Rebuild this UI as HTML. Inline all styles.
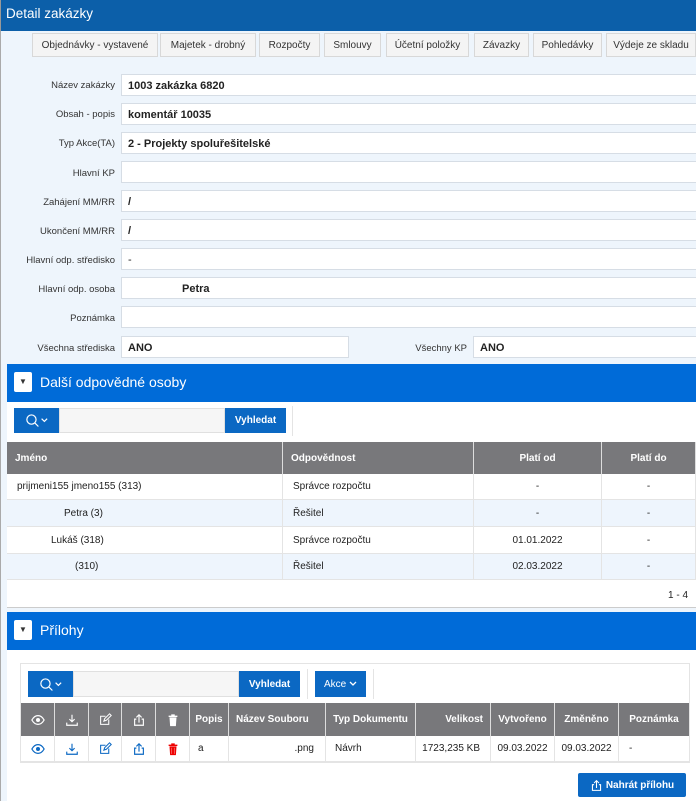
<!DOCTYPE html>
<html><head><meta charset="utf-8"><style>
*{box-sizing:border-box;margin:0;padding:0}
body{width:696px;height:801px;overflow:hidden;font-family:"Liberation Sans",sans-serif;background:#eef5fc;position:relative;font-size:10px;color:#222}
.a{position:absolute}
.hdr{left:0;top:0;width:696px;height:31px;background:#0c5fa9;color:#fff;font-size:13.5px;padding:6px 0 0 5px;border-left:1px solid #999}
.btn{top:33px;height:24px;background:#f4f4f4;border:1px solid #d8d8d8;font-size:10px;display:flex;align-items:center;justify-content:center;color:#333}
.lbl{width:115px;text-align:right;font-size:9.5px;color:#333;left:0}
.inp{background:#fff;border:1px solid #d6dde5;height:22px;font-size:11px;font-weight:bold;padding:5px 6px;left:121px;width:580px}
.sh{left:7px;width:689px;height:38px;background:#006bd8;color:#fff;font-size:14px}
.tg{left:7px;top:8px;width:18px;height:20px;background:#fff;border-radius:2px;color:#333;font-size:8px;text-align:center;line-height:20px}
.sb{background:#0b68c3;color:#fff;display:flex;align-items:center;justify-content:center;font-weight:bold;font-size:10px}
.th{background:#78787b;color:#fff;font-weight:bold;font-size:10px;display:flex;align-items:center;border-right:1px solid #ddd}
.td{font-size:10px;display:flex;align-items:center;border-right:1px solid #e4e4e4;border-bottom:1px solid #e4e4e4}
svg{display:block}
</style></head><body>
<svg width="0" height="0" style="position:absolute">
<defs>
<symbol id="eye" viewBox="0 0 16 16"><path d="M1 8c2-3.5 4.5-5 7-5s5 1.5 7 5c-2 3.5-4.5 5-7 5S3 11.5 1 8z" fill="none" stroke="currentColor" stroke-width="1.4"/><circle cx="8" cy="8" r="2.3" fill="currentColor"/></symbol>
<symbol id="dl" viewBox="0 0 16 16"><path d="M8 2v8M5 7l3 3 3-3M2 11v3h12v-3" fill="none" stroke="currentColor" stroke-width="1.3"/></symbol>
<symbol id="ed" viewBox="0 0 16 16"><path d="M12 8v6H2V4h6" fill="none" stroke="currentColor" stroke-width="1.3"/><path d="M6 10l1-3 6-6 2 2-6 6z" fill="none" stroke="currentColor" stroke-width="1.3"/></symbol>
<symbol id="up" viewBox="0 0 16 16"><path d="M8 11V2M5 5l3-3 3 3M5 7H3v7h10V7h-2" fill="none" stroke="currentColor" stroke-width="1.3"/></symbol>
<symbol id="tr" viewBox="0 0 16 16"><path d="M3 3h10v1.5H3zM6 1.5h4V3H6zM4 5h8l-.7 10H4.7z" fill="currentColor"/><path d="M6.5 6.5v7M9.5 6.5v7" stroke="#fff" stroke-width=".8" opacity=".5"/></symbol>
<symbol id="sr" viewBox="0 0 26 16"><circle cx="7" cy="7" r="5" fill="none" stroke="currentColor" stroke-width="1.3"/><path d="M10.5 10.5l4 4M18 6l3 3 3-3" fill="none" stroke="currentColor" stroke-width="1.3"/></symbol>
</defs></svg>
<div class="a" style="left:0;top:0;width:1px;height:801px;background:#aaa"></div>
<div class="a hdr">Detail zakázky</div>
<div class="a btn" style="left:32px;width:126px">Objednávky - vystavené</div>
<div class="a btn" style="left:160px;width:96px">Majetek - drobný</div>
<div class="a btn" style="left:259px;width:61px">Rozpočty</div>
<div class="a btn" style="left:324px;width:57px">Smlouvy</div>
<div class="a btn" style="left:386px;width:83px">Účetní položky</div>
<div class="a btn" style="left:474px;width:55px">Závazky</div>
<div class="a btn" style="left:533px;width:69px">Pohledávky</div>
<div class="a btn" style="left:606px;width:90px">Výdeje ze skladu</div>

<div class="a lbl" style="top:80px">Název zakázky</div><div class="a inp" style="top:74px">1003 zakázka 6820</div>
<div class="a lbl" style="top:109px">Obsah - popis</div><div class="a inp" style="top:103px">komentář 10035</div>
<div class="a lbl" style="top:138px">Typ Akce(TA)</div><div class="a inp" style="top:132px">2 - Projekty spoluřešitelské</div>
<div class="a lbl" style="top:168px">Hlavní KP</div><div class="a inp" style="top:161px"></div>
<div class="a lbl" style="top:197px">Zahájení MM/RR</div><div class="a inp" style="top:190px">/</div>
<div class="a lbl" style="top:226px">Ukončení MM/RR</div><div class="a inp" style="top:219px">/</div>
<div class="a lbl" style="top:255px">Hlavní odp. středisko</div><div class="a inp" style="top:248px;font-weight:normal">-</div>
<div class="a lbl" style="top:284px">Hlavní odp. osoba</div><div class="a inp" style="top:277px;padding-left:60px">Petra</div>
<div class="a lbl" style="top:313px">Poznámka</div><div class="a inp" style="top:306px"></div>
<div class="a lbl" style="top:343px">Všechna střediska</div><div class="a inp" style="top:336px;width:228px">ANO</div>
<div class="a lbl" style="top:343px;left:352px">Všechny KP</div><div class="a inp" style="top:336px;left:473px;width:230px">ANO</div>

<div class="a sh" style="top:364px"><div class="a tg">▼</div><div class="a" style="left:33px;top:10px">Další odpovědné osoby</div></div>
<div class="a" style="left:7px;top:402px;width:689px;height:206px;background:#fff;border-bottom:1px solid #ccc"></div>
<div class="a sb" style="left:14px;top:408px;width:45px;height:25px"><svg width="24" height="15"><use href="#sr"/></svg></div>
<div class="a" style="left:59px;top:408px;width:166px;height:25px;background:#f6f6f6;border:1px solid #e0e0e0"></div>
<div class="a sb" style="left:225px;top:408px;width:61px;height:25px">Vyhledat</div>
<div class="a" style="left:292px;top:406px;width:1px;height:30px;background:#e4e4e4"></div>
<div class="a th" style="left:7px;top:442px;width:276px;height:32px;padding-left:8px">Jméno</div>
<div class="a th" style="left:283px;top:442px;width:191px;height:32px;padding-left:8px">Odpovědnost</div>
<div class="a th" style="left:474px;top:442px;width:128px;height:32px;justify-content:center">Platí od</div>
<div class="a th" style="left:602px;top:442px;width:94px;height:32px;justify-content:center">Platí do</div>

<div class="a td" style="left:7px;top:474px;width:276px;height:26px;padding-left:10px">prijmeni155 jmeno155 (313)</div>
<div class="a td" style="left:283px;top:474px;width:191px;height:26px;padding-left:10px">Správce rozpočtu</div>
<div class="a td" style="left:474px;top:474px;width:128px;height:26px;justify-content:center">-</div>
<div class="a td" style="left:602px;top:474px;width:94px;height:26px;justify-content:center">-</div>

<div class="a td" style="left:7px;top:500px;width:276px;height:27px;padding-left:57px;background:#eef5fd">Petra (3)</div>
<div class="a td" style="left:283px;top:500px;width:191px;height:27px;padding-left:10px;background:#eef5fd">Řešitel</div>
<div class="a td" style="left:474px;top:500px;width:128px;height:27px;justify-content:center;background:#eef5fd">-</div>
<div class="a td" style="left:602px;top:500px;width:94px;height:27px;justify-content:center;background:#eef5fd">-</div>

<div class="a td" style="left:7px;top:527px;width:276px;height:27px;padding-left:44px">Lukáš (318)</div>
<div class="a td" style="left:283px;top:527px;width:191px;height:27px;padding-left:10px">Správce rozpočtu</div>
<div class="a td" style="left:474px;top:527px;width:128px;height:27px;justify-content:center">01.01.2022</div>
<div class="a td" style="left:602px;top:527px;width:94px;height:27px;justify-content:center">-</div>

<div class="a td" style="left:7px;top:554px;width:276px;height:26px;padding-left:68px;background:#eef5fd">(310)</div>
<div class="a td" style="left:283px;top:554px;width:191px;height:26px;padding-left:10px;background:#eef5fd">Řešitel</div>
<div class="a td" style="left:474px;top:554px;width:128px;height:26px;justify-content:center;background:#eef5fd">02.03.2022</div>
<div class="a td" style="left:602px;top:554px;width:94px;height:26px;justify-content:center;background:#eef5fd">-</div>
<div class="a" style="left:668px;top:590px;font-size:10px">1 - 4</div>

<div class="a sh" style="top:612px"><div class="a tg">▼</div><div class="a" style="left:33px;top:10px">Přílohy</div></div>
<div class="a" style="left:7px;top:650px;width:689px;height:151px;background:#fff"></div>
<div class="a" style="left:20px;top:663px;width:670px;height:100px;border:1px solid #e4e4e4"></div>
<div class="a sb" style="left:28px;top:671px;width:45px;height:26px"><svg width="24" height="15"><use href="#sr"/></svg></div>
<div class="a" style="left:73px;top:671px;width:166px;height:26px;background:#f6f6f6;border:1px solid #e0e0e0"></div>
<div class="a sb" style="left:239px;top:671px;width:61px;height:26px">Vyhledat</div>
<div class="a" style="left:307px;top:669px;width:1px;height:30px;background:#e4e4e4"></div>
<div class="a sb" style="left:315px;top:671px;width:51px;height:26px;font-weight:normal">Akce&nbsp;<svg width="8" height="6" viewBox="0 0 8 6"><path d="M1 1l3 3 3-3" fill="none" stroke="#fff" stroke-width="1.3"/></svg></div>
<div class="a" style="left:373px;top:669px;width:1px;height:30px;background:#e4e4e4"></div>

<div class="a th" style="left:21px;top:703px;width:34px;height:33px;justify-content:center"><svg width="14" height="14"><use href="#eye"/></svg></div>
<div class="a th" style="left:55px;top:703px;width:34px;height:33px;justify-content:center"><svg width="14" height="14"><use href="#dl"/></svg></div>
<div class="a th" style="left:89px;top:703px;width:33px;height:33px;justify-content:center"><svg width="13" height="13"><use href="#ed"/></svg></div>
<div class="a th" style="left:122px;top:703px;width:34px;height:33px;justify-content:center"><svg width="14" height="14"><use href="#up"/></svg></div>
<div class="a th" style="left:156px;top:703px;width:34px;height:33px;justify-content:center"><svg width="14" height="14"><use href="#tr"/></svg></div>
<div class="a th" style="left:190px;top:703px;width:39px;height:33px;justify-content:center">Popis</div>
<div class="a th" style="left:229px;top:703px;width:97px;height:33px;padding-left:7px">Název Souboru</div>
<div class="a th" style="left:326px;top:703px;width:90px;height:33px;justify-content:center">Typ Dokumentu</div>
<div class="a th" style="left:416px;top:703px;width:75px;height:33px;justify-content:flex-end;padding-right:7px">Velikost</div>
<div class="a th" style="left:491px;top:703px;width:64px;height:33px;justify-content:center">Vytvořeno</div>
<div class="a th" style="left:555px;top:703px;width:64px;height:33px;justify-content:center">Změněno</div>
<div class="a th" style="left:619px;top:703px;width:70px;height:33px;justify-content:center;border-right:none">Poznámka</div>

<div class="a td" style="left:21px;top:736px;width:34px;height:26px;justify-content:center;color:#0b68c3"><svg width="14" height="14"><use href="#eye"/></svg></div>
<div class="a td" style="left:55px;top:736px;width:34px;height:26px;justify-content:center;color:#0b68c3"><svg width="14" height="14"><use href="#dl"/></svg></div>
<div class="a td" style="left:89px;top:736px;width:33px;height:26px;justify-content:center;color:#0b68c3"><svg width="13" height="13"><use href="#ed"/></svg></div>
<div class="a td" style="left:122px;top:736px;width:34px;height:26px;justify-content:center;color:#0b68c3"><svg width="14" height="14"><use href="#up"/></svg></div>
<div class="a td" style="left:156px;top:736px;width:34px;height:26px;justify-content:center;color:#e00"><svg width="14" height="14"><use href="#tr"/></svg></div>
<div class="a td" style="left:190px;top:736px;width:39px;height:26px;padding-left:8px">a</div>
<div class="a td" style="left:229px;top:736px;width:97px;height:26px;justify-content:flex-end;padding-right:11px">.png</div>
<div class="a td" style="left:326px;top:736px;width:90px;height:26px;padding-left:9px">Návrh</div>
<div class="a td" style="left:416px;top:736px;width:75px;height:26px;justify-content:flex-end;padding-right:10px">1723,235 KB</div>
<div class="a td" style="left:491px;top:736px;width:64px;height:26px;justify-content:center">09.03.2022</div>
<div class="a td" style="left:555px;top:736px;width:64px;height:26px;justify-content:center">09.03.2022</div>
<div class="a td" style="left:619px;top:736px;width:70px;height:26px;padding-left:10px;border-right:none">-</div>

<div class="a sb" style="left:578px;top:773px;width:108px;height:24px;border-radius:2px;color:#fff"><svg width="13" height="13" style="margin-right:3px"><use href="#up"/></svg>Nahrát přílohu</div>
</body></html>
